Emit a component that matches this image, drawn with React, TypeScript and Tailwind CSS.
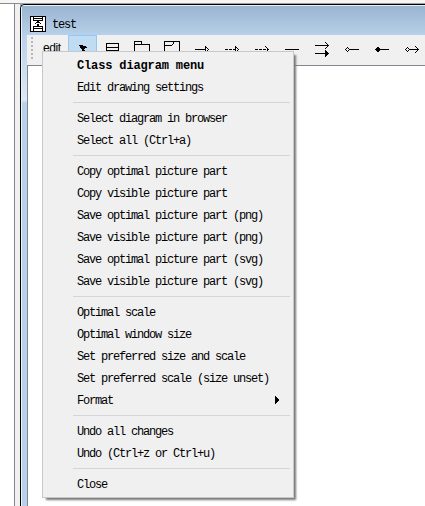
import React from 'react';

interface MenuRowProps {
  label: string;
  bold?: boolean;
  submenu?: boolean;
}

const menuGroups: MenuRowProps[][] = [
  [{ label: 'Class diagram menu', bold: true }, { label: 'Edit drawing settings' }],
  [{ label: 'Select diagram in browser' }, { label: 'Select all (Ctrl+a)' }],
  [
    { label: 'Copy optimal picture part' },
    { label: 'Copy visible picture part' },
    { label: 'Save optimal picture part (png)' },
    { label: 'Save visible picture part (png)' },
    { label: 'Save optimal picture part (svg)' },
    { label: 'Save visible picture part (svg)' },
  ],
  [
    { label: 'Optimal scale' },
    { label: 'Optimal window size' },
    { label: 'Set preferred size and scale' },
    { label: 'Set preferred scale (size unset)' },
    { label: 'Format', submenu: true },
  ],
  [{ label: 'Undo all changes' }, { label: 'Undo (Ctrl+z or Ctrl+u)' }],
  [{ label: 'Close' }],
];

const MenuRow: React.FC<MenuRowProps> = ({ label, bold, submenu }) => (
  <div className={`flex h-[22px] items-center justify-between pl-[34px] pr-[14px] ${bold ? 'font-bold tracking-[-0.14px]' : ''}`}>
    <span className="whitespace-pre pt-[2px]">{label}</span>
    {submenu && (
      <svg width="4" height="8" viewBox="0 0 4 8" shapeRendering="crispEdges">
        <path d="M0 0L4 4L0 8Z" />
      </svg>
    )}
  </div>
);

const ContextMenu: React.FC = () => (
  <div className="absolute left-[42px] top-[51px] h-[447px] w-[252px] border border-[#c8c8c8] bg-[#f0f0f0] py-[2px] shadow-[3px_3px_2px_-1px_#777]">
    {menuGroups.map((group, i) => (
      <React.Fragment key={i}>
        {i > 0 && <div className="mb-1 ml-[30px] mr-[3px] mt-1 h-px bg-[#d5d5d5]" />}
        {group.map((row) => (
          <MenuRow key={row.label} {...row} />
        ))}
      </React.Fragment>
    ))}
  </div>
);

// one filled square per "x,y" pair
const Dots: React.FC<{ at: string }> = ({ at }) => (
  <path stroke="none" fill="#000" d={at.split(' ').map((p) => `M${p}h1v1h-1z`).join('')} />
);

const Diamond: React.FC = () => <Dots at="1,8 2,7 3,6 4,7 5,8 4,9 3,10 2,9" />;

const ArrowHead: React.FC = () => <Dots at="11,5 12,6 13,7 14,8 13,9 12,10 11,11" />;

const Tool: React.FC<{ children: React.ReactNode; active?: boolean }> = ({ children, active }) => (
  <div
    className={`flex h-[30px] shrink-0 items-center justify-center ${
      active ? 'mr-px w-[29px] border border-[#90c8f6] bg-[#c0dcf3] pl-px' : 'w-[30px]'
    }`}
  >
    <svg width="18" height="18" viewBox="0 0 18 18" fill="none" stroke="#000" shapeRendering="crispEdges" className="shrink-0">
      {children}
    </svg>
  </div>
);

const Toolbar: React.FC = () => (
  <div className="flex h-[30px] overflow-hidden bg-[#f0f0f0]">
    <div className="ml-[4px] mt-[2px] flex w-[2px] flex-col gap-[2px]">
      {[0, 1, 2, 3, 4, 5].map((n) => (
        <span key={n} className="h-[2px] w-[2px] shrink-0 bg-[#b8b8b8]" />
      ))}
    </div>
    <span className="ml-[10px] mt-[6px] w-[25px] font-['Liberation_Sans',sans-serif] leading-[14px] tracking-[-0.4px]">edit</span>
    <Tool active>
      <path stroke="none" fill="#000" d="M5 4H9V5H12V6H13V7H11V8H10V9H11V10H8V8H7V7H6V5H5Z" />
    </Tool>
    <Tool>
      <path d="M2.5 2.5H14.5V9.5H2.5ZM2.5 6.5H14.5" />
    </Tool>
    <Tool>
      <path d="M.5 14V.5H7.5V3.5H15.5V14M.5 3.5H7.5" />
    </Tool>
    <Tool>
      <path d="M.5 14V.5H15.5V14M.5 4.5H7.5" />
      <Dots at="8,3 9,2 9,1" />
    </Tool>
    <Tool>
      <path d="M1 8.5H12M11.5 5V12" />
      <Dots at="12,6 13,7 14,8 13,9 12,10" />
    </Tool>
    <Tool>
      <path d="M1 8.5H12" strokeDasharray="3 1" />
      <path d="M11.5 5V12" />
      <Dots at="12,6 13,7 14,8 13,9 12,10" />
    </Tool>
    <Tool>
      <path d="M1 8.5H14" strokeDasharray="3 1" />
      <ArrowHead />
    </Tool>
    <Tool>
      <path d="M1 8.5H15" />
    </Tool>
    <Tool>
      <path d="M1 4.5H15M1 12.5H12" />
      <Dots at="11,1 12,2 13,3 13,5 12,6 11,7" />
      <path d="M11 9H12V10H13V11H14V12H15V13H14V14H13V15H12V16H11Z" stroke="none" fill="#000" />
    </Tool>
    <Tool>
      <Diamond />
      <path d="M6 8.5H15" />
    </Tool>
    <Tool>
      <path d="M2 7H3V6H5V7H6V10H5V11H3V10H2V9H1V8H2Z" stroke="none" fill="#000" />
      <path d="M6 8.5H15" />
    </Tool>
    <Tool>
      <Diamond />
      <path d="M6 8.5H15" />
      <ArrowHead />
    </Tool>
  </div>
);

const App: React.FC = () => (
  <div className="relative flex h-[506px] w-[425px] overflow-hidden bg-white font-['Liberation_Mono',monospace] text-[12px] leading-none tracking-[-1.2px] text-black">
    <div className="flex w-5 shrink-0 flex-col">
      <div className="h-[3px] bg-[#f5f5f5]" />
      <div className="h-px bg-[#8b8b8b]" />
      <div className="flex-1 border-r-[5px] border-[#f0f0f0]">
        <div className="h-full border-r border-[#82878f]" />
      </div>
    </div>
    <div className="flex flex-1 flex-col overflow-hidden bg-[#a0a0a0]">
      <div className="h-[3px] shrink-0 bg-[#f5f5f5]" />
      <div className="h-px shrink-0 bg-[#a0a0a0]" />
      <div className="flex w-[420px] flex-1 flex-col overflow-hidden rounded-tl-[5px] border-l border-t border-black bg-[#b9d1ea]">
        <div className="flex h-[31px] items-start border-l border-t border-[#e8f1fa] bg-linear-to-b from-[#99b4d1] to-[#b9d1ea] pl-[8px] pt-[10px]">
          <svg width="16" height="16" viewBox="0 0 16 16" fill="none" stroke="#000" shapeRendering="crispEdges">
            <path d="M.5 .5H15.5V15.5H.5Z" fill="#fff" />
            <path d="M3.5 1V4.5H12.5V1M4 2.5H12M3.5 15V10.5H12.5V15M4 12.5H12" />
            <Dots at="7,5 8,5 6,6 7,6 8,6 9,6 5,7 10,7 7,8 8,8 7,9 8,9" />
          </svg>
          <span className="ml-[6px] mt-[3px]">test</span>
        </div>
        <div className="-mt-px flex flex-1">
          <div className="w-[6px] border-l border-[#e8f1fa] bg-linear-to-b from-[#b9d1ea] via-[#dce9f6] via-[65px] to-[#b9d1ea] to-[68px]" />
          <div className="flex-1">
            <Toolbar />
            <div className="h-[441px] border-l border-t border-[#82878f] bg-white" />
          </div>
        </div>
      </div>
    </div>
    <ContextMenu />
  </div>
);

export default App;
